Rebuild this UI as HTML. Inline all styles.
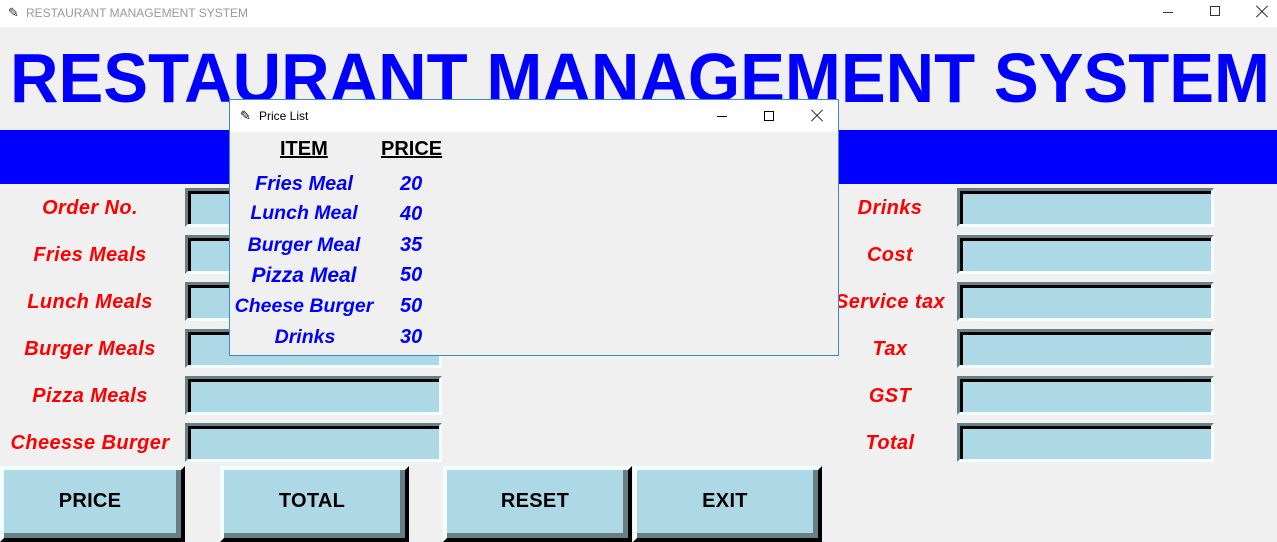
<!DOCTYPE html>
<html><head><meta charset="utf-8"><style>
*{margin:0;padding:0;box-sizing:border-box}
body{width:1277px;height:539px;background:#f0f0f0;position:relative;overflow:hidden;font-family:"Liberation Sans",Arial,sans-serif}
.tb{position:absolute;left:0;top:0;width:1277px;height:27px;background:#fff;font-size:12px;color:#999}
.lbl{position:absolute;color:#f00;font-weight:bold;font-style:italic;font-size:20px;text-align:center;width:180px;line-height:38px;letter-spacing:0.4px}
.ent{position:absolute;width:257px;height:39px;border:3px solid;border-color:#687f84 #f4ffff #f4ffff #687f84;background:#add8e6}
.ent div{position:absolute;left:0;top:0;right:0;bottom:0;border-top:3px solid #000;border-left:3px solid #000}
.btn{position:absolute;top:466px;height:76px;border:4px solid;border-color:#f4ffff #000 #000 #f4ffff;background:#add8e6}
.btn div{position:absolute;left:0;top:0;right:0;bottom:0;border-right:5px solid #687f84;border-bottom:5px solid #687f84;font-weight:bold;font-size:20px;text-align:center;line-height:62px;color:#000;letter-spacing:0.3px}
.dlg{position:absolute;left:229px;top:99px;width:610px;height:257px;border:1px solid #3f88c9;background:#f0f0f0}
.dt{height:32px;background:#fff;font-size:12px;line-height:32px;padding-left:29px;color:#000;position:relative}
.it{position:absolute;color:#00f;font-weight:bold;font-style:italic;font-size:20px;text-align:center}
.x{position:absolute;width:14px;height:14px}
.x:before,.x:after{content:"";position:absolute;left:-1px;top:6px;width:16px;height:1px;background:#333;transform:rotate(45deg)}
.x:after{transform:rotate(-45deg)}
</style></head><body>
<div class="tb"><span style="position:absolute;left:8px;top:5px;color:#333;font-size:13px">&#x270E;</span><span style="position:absolute;left:26px;top:6px">RESTAURANT MANAGEMENT SYSTEM</span>
<span style="position:absolute;left:1163px;top:12px;width:10px;height:1px;background:#333"></span>
<span style="position:absolute;left:1210px;top:6px;width:10px;height:10px;border:1px solid #333"></span>
<span class="x" style="left:1255px;top:5px"></span></div>
<svg style="position:absolute;left:0;top:27px" width="1277" height="90"><text x="10" y="75" textLength="1260" lengthAdjust="spacingAndGlyphs" font-family="Liberation Sans,Arial,sans-serif" font-weight="bold" font-size="70" fill="#00f">RESTAURANT MANAGEMENT SYSTEM</text></svg>
<div style="position:absolute;left:0;top:130px;width:1277px;height:54px;background:#00f"></div>

<div class="lbl" style="left:0;top:189px">Order No.</div>
<div class="lbl" style="left:0;top:236px">Fries Meals</div>
<div class="lbl" style="left:0;top:283px">Lunch Meals</div>
<div class="lbl" style="left:0;top:330px">Burger Meals</div>
<div class="lbl" style="left:0;top:377px">Pizza Meals</div>
<div class="lbl" style="left:-2px;top:424px;width:184px">Cheesse Burger</div>
<div class="ent" style="left:185px;top:188px"><div></div></div>
<div class="ent" style="left:185px;top:235px"><div></div></div>
<div class="ent" style="left:185px;top:282px"><div></div></div>
<div class="ent" style="left:185px;top:329px"><div></div></div>
<div class="ent" style="left:185px;top:376px"><div></div></div>
<div class="ent" style="left:185px;top:423px"><div></div></div>

<div class="lbl" style="left:800px;top:189px">Drinks</div>
<div class="lbl" style="left:800px;top:236px">Cost</div>
<div class="lbl" style="left:800px;top:283px">Service tax</div>
<div class="lbl" style="left:800px;top:330px">Tax</div>
<div class="lbl" style="left:800px;top:377px">GST</div>
<div class="lbl" style="left:800px;top:424px">Total</div>
<div class="ent" style="left:957px;top:188px"><div></div></div>
<div class="ent" style="left:957px;top:235px"><div></div></div>
<div class="ent" style="left:957px;top:282px"><div></div></div>
<div class="ent" style="left:957px;top:329px"><div></div></div>
<div class="ent" style="left:957px;top:376px"><div></div></div>
<div class="ent" style="left:957px;top:423px"><div></div></div>

<div class="btn" style="left:0;width:185px"><div>PRICE</div></div>
<div class="btn" style="left:220px;width:189px"><div>TOTAL</div></div>
<div class="btn" style="left:443px;width:189px"><div>RESET</div></div>
<div class="btn" style="left:633px;width:189px"><div>EXIT</div></div>

<div class="dlg">
<div class="dt"><span style="position:absolute;left:10px;top:0;font-size:13px">&#x270E;</span>Price List
<span style="position:absolute;left:487px;top:16px;width:10px;height:1px;background:#000"></span>
<span style="position:absolute;left:534px;top:11px;width:10px;height:10px;border:1px solid #000"></span>
<span class="x" style="left:580px;top:9px"></span></div>
<div style="position:absolute;left:50px;top:38px;font-weight:bold;font-size:20px;text-decoration:underline">ITEM</div>
<div style="position:absolute;left:151px;top:38px;font-weight:bold;font-size:20px;text-decoration:underline">PRICE</div>
<div class="it" style="left:0;width:148px;top:73px">Fries Meal</div>
<div class="it" style="left:0;width:148px;top:102px;font-size:19.5px">Lunch Meal</div>
<div class="it" style="left:0;width:148px;top:134px;font-size:19.5px">Burger Meal</div>
<div class="it" style="left:0;width:148px;top:164px;font-size:21px">Pizza Meal</div>
<div class="it" style="left:-6px;width:160px;top:195px;font-size:19.5px">Cheese Burger</div>
<div class="it" style="left:0;width:150px;top:226px;font-size:19.5px">Drinks</div>
<div class="it" style="left:170px;top:73px">20</div>
<div class="it" style="left:170px;top:103px">40</div>
<div class="it" style="left:170px;top:134px">35</div>
<div class="it" style="left:170px;top:164px">50</div>
<div class="it" style="left:170px;top:195px">50</div>
<div class="it" style="left:170px;top:226px">30</div>
</div>
</body></html>
